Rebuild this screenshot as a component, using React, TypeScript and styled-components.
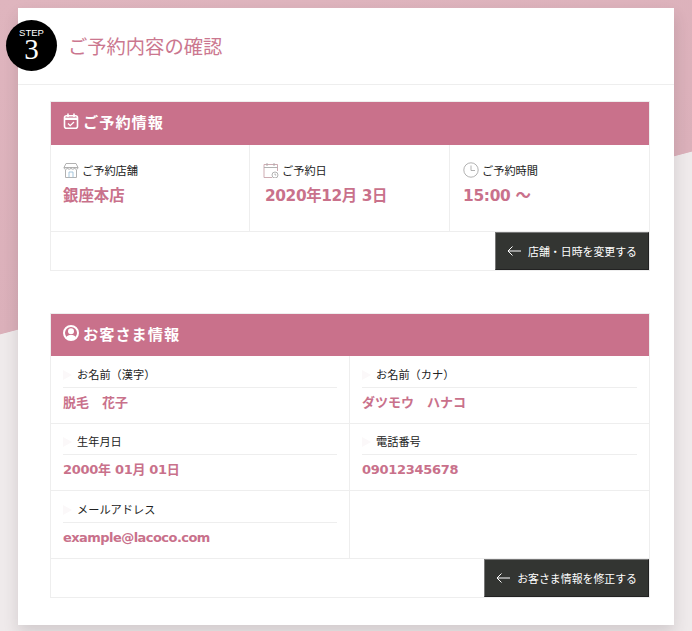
import React from "react";
import styled, { createGlobalStyle } from "styled-components";

const Global = createGlobalStyle`
  html, body { margin: 0; padding: 0; }
  body {
    min-height: 631px;
    overflow: hidden;
    font-family: "DejaVu Sans", "Noto Sans CJK JP", sans-serif;
    background: linear-gradient(165.2deg, #dfb5be 0%, #dbb0ba 40.2%, #efeaeb 40.3%, #efeaeb 100%);
  }
`;

const Page = styled.div`
  padding: 8px 18px 0;
  height: 640px;
  overflow: hidden;
`;

const Card = styled.main`
  position: relative;
  background: #fff;
  height: 617px;
  box-shadow: 0 8px 14px rgba(60, 50, 55, 0.16);
`;

const Head = styled.header`
  height: 77px;
  border-bottom: 1px solid #eeeeee;
  display: flex;
  align-items: center;
  padding: 0 0 0 50px;
  box-sizing: border-box;
`;

const Badge = styled.div`
  position: absolute;
  left: -12px;
  top: 12px;
  width: 51px;
  height: 51px;
  border-radius: 50%;
  background: #000;
  color: #fff;
  display: flex;
  flex-direction: column;
  align-items: center;
`;

const StepWord = styled.span`
  font: 9.5px/10px "Liberation Sans", sans-serif;
  margin-top: 8px;
`;

const StepNum = styled.span`
  font: 29px/22px "Liberation Serif", serif;
`;

const Title = styled.h1`
  margin: 0;
  font: 400 19.3px/28px "Noto Sans CJK JP", sans-serif;
  color: #cb778f;
`;

const Body = styled.div`
  padding: 16px 24px 0 32px;
  display: flex;
  flex-direction: column;
  gap: 42px;
`;

const Section = styled.section`
  border: 1px solid #eeeeee;
  display: flex;
  flex-direction: column;
`;

const SectionHead = styled.h2<{ $h: number }>`
  margin: 0;
  height: ${(p) => p.$h}px;
  box-sizing: border-box;
  background: #c9718b;
  color: #fff;
  display: flex;
  align-items: center;
  gap: 4px;
  padding: 0 0 5px 12px;
  font: 700 15.2px/20px "Noto Sans CJK JP", sans-serif;
  letter-spacing: 1px;
`;

const Three = styled.div`
  display: grid;
  grid-template-columns: 198px 200px 1fr;
  height: 86px;
  border-bottom: 1px solid #eeeeee;
`;

const ResCell = styled.div`
  padding: 16px 12px 0 12px;
  & + & {
    border-left: 1px solid #eeeeee;
    padding-left: 13px;
  }
`;

const ResLabel = styled.div`
  display: flex;
  align-items: center;
  gap: 3px;
  height: 18px;
  font: 400 11.2px/18px "Noto Sans CJK JP", sans-serif;
  color: #222;
`;

const ResValue = styled.div<{ $offset?: number; $track?: number }>`
  margin: 7px 0 0 ${(p) => p.$offset ?? 0}px;
  font: 700 15.4px/20px "DejaVu Sans", "Noto Sans CJK JP", sans-serif;
  letter-spacing: ${(p) => p.$track ?? 0}px;
  color: #c9718b;
`;

const Foot = styled.div`
  display: flex;
  justify-content: flex-end;
  height: 38px;
`;

const BackButton = styled.button`
  height: 38px;
  border: 1px solid;
  border-color: #777 #222 #222 #777;
  background: #333532;
  color: #fff;
  display: flex;
  align-items: center;
  gap: 7px;
  padding: 0 11px 1px 11px;
  font: 400 10.9px/18px "Noto Sans CJK JP", sans-serif;
`;

const Grid = styled.div`
  display: grid;
  grid-template-columns: 298px 1fr;
`;

const InfoCell = styled.div<{ $h: number; $pad: number; $first?: boolean }>`
  height: ${(p) => p.$h}px;
  box-sizing: border-box;
  padding: ${(p) => p.$pad}px 12px 0;
  border-bottom: 1px solid #eeeeee;
  ${(p) => (p.$first ? "" : "border-left: 1px solid #eeeeee;")}
`;

const InfoLabel = styled.div`
  height: 23px;
  border-bottom: 1px solid #eeeeee;
  padding-left: 14px;
  position: relative;
  font: 400 11.2px/20px "Noto Sans CJK JP", sans-serif;
  color: #222;
  &::before {
    content: "";
    position: absolute;
    left: 0;
    top: 6px;
    border-left: 9px solid #fbf8f9;
    border-top: 5.5px solid transparent;
    border-bottom: 5.5px solid transparent;
  }
`;

const InfoValue = styled.div<{ $track?: number }>`
  margin-top: 5px;
  font: 700 13px/20px "DejaVu Sans", "Noto Sans CJK JP", sans-serif;
  letter-spacing: ${(p) => p.$track ?? 0}px;
  color: #c9718b;
`;

const CalendarCheck = () => (
  <svg width="16" height="16" viewBox="0 0 16 16" fill="none" stroke="#fff" strokeWidth="1.6">
    <rect x="1.5" y="2.8" width="13" height="12.4" rx="2" />
    <path d="M1.5 5.8h13" strokeWidth="2.4" />
    <path d="M5 .5v3.5M11 .5v3.5" />
    <path d="M5 10.5l2.2 2.2L11 9" strokeWidth="1.3" />
  </svg>
);

const UserCircle = () => (
  <svg width="16" height="16" viewBox="0 0 16 16">
    <circle cx="8" cy="8" r="7" fill="none" stroke="#fff" strokeWidth="2" />
    <circle cx="8" cy="6.2" r="3" fill="#fff" />
    <path d="M3 12.6c1-2 3-2.6 5-2.6s4 .6 5 2.6a7 7 0 0 1-10 0z" fill="#fff" />
  </svg>
);

const Shop = () => (
  <svg width="16" height="16" viewBox="0 0 16 16" fill="none" stroke="#a9a9a9" strokeWidth="0.9">
    <path d="M3 1.5h10l2 4H1z" />
    <path d="M1 5.5a1.75 1.75 0 0 0 3.5 0 1.75 1.75 0 0 0 3.5 0 1.75 1.75 0 0 0 3.5 0 1.75 1.75 0 0 0 3.5 0" />
    <path d="M2.5 8v7.5h11V8" />
    <path d="M6 15.5V10h4v5.5" stroke="#9cc0d8" />
  </svg>
);

const CalendarClock = () => (
  <svg width="16" height="16" viewBox="0 0 16 16" fill="none" stroke="#a9a9a9" strokeWidth="0.9">
    <path d="M9 15.5H1V2.5h13.5V9" stroke="#c8a4aa" />
    <path d="M1 5.5h13.5" />
    <path d="M4 1v3M11 1v3" />
    <circle cx="12" cy="13" r="3" fill="#fff" />
    <path d="M12 11.5V13h1.2" />
  </svg>
);

const Clock = () => (
  <svg width="16" height="16" viewBox="0 0 16 16" fill="none" stroke="#a9a9a9" strokeWidth="0.9">
    <circle cx="8" cy="8" r="7.2" />
    <path d="M8 3.5V8.5h4" />
  </svg>
);

const ArrowLeft = () => (
  <svg width="14" height="10" viewBox="0 0 14 10" fill="none" stroke="#fff" strokeWidth="1">
    <path d="M14 5H1M5.5.5L1 5l4.5 4.5" />
  </svg>
);

const reservation = [
  { icon: <Shop />, label: "ご予約店舗", value: "銀座本店" },
  { icon: <CalendarClock />, label: "ご予約日", value: "2020年12月 3日", offset: 2, track: -0.4 },
  { icon: <Clock />, label: "ご予約時間", value: "15:00 ～", track: -0.3 },
];

const customer = [
  { label: "お名前（漢字）", value: "脱毛　花子", h: 68, pad: 8 },
  { label: "お名前（カナ）", value: "ダツモウ　ハナコ", h: 68, pad: 8 },
  { label: "生年月日", value: "2000年 01月 01日", h: 67, pad: 7, track: -0.3 },
  { label: "電話番号", value: "09012345678", h: 67, pad: 7, track: -0.3 },
  { label: "メールアドレス", value: "example@lacoco.com", h: 68, pad: 8, track: -0.55 },
  { label: "", value: "", h: 68, pad: 8 },
];

export default function App() {
  return (
    <>
      <Global />
      <Page>
        <Card>
          <Badge>
            <StepWord>STEP</StepWord>
            <StepNum>3</StepNum>
          </Badge>
          <Head>
            <Title>ご予約内容の確認</Title>
          </Head>
          <Body>
            <Section>
              <SectionHead $h={43}>
                <CalendarCheck />
                ご予約情報
              </SectionHead>
              <Three>
                {reservation.map((r) => (
                  <ResCell key={r.label}>
                    <ResLabel>
                      {r.icon}
                      {r.label}
                    </ResLabel>
                    <ResValue $offset={r.offset} $track={r.track}>
                      {r.value}
                    </ResValue>
                  </ResCell>
                ))}
              </Three>
              <Foot>
                <BackButton>
                  <ArrowLeft />
                  店舗・日時を変更する
                </BackButton>
              </Foot>
            </Section>
            <Section>
              <SectionHead $h={42}>
                <UserCircle />
                お客さま情報
              </SectionHead>
              <Grid>
                {customer.map((c, i) => (
                  <InfoCell key={i} $h={c.h} $pad={c.pad} $first={i % 2 === 0}>
                    {c.label && (
                      <>
                        <InfoLabel>{c.label}</InfoLabel>
                        <InfoValue $track={c.track}>{c.value}</InfoValue>
                      </>
                    )}
                  </InfoCell>
                ))}
              </Grid>
              <Foot>
                <BackButton>
                  <ArrowLeft />
                  お客さま情報を修正する
                </BackButton>
              </Foot>
            </Section>
          </Body>
        </Card>
      </Page>
    </>
  );
}
